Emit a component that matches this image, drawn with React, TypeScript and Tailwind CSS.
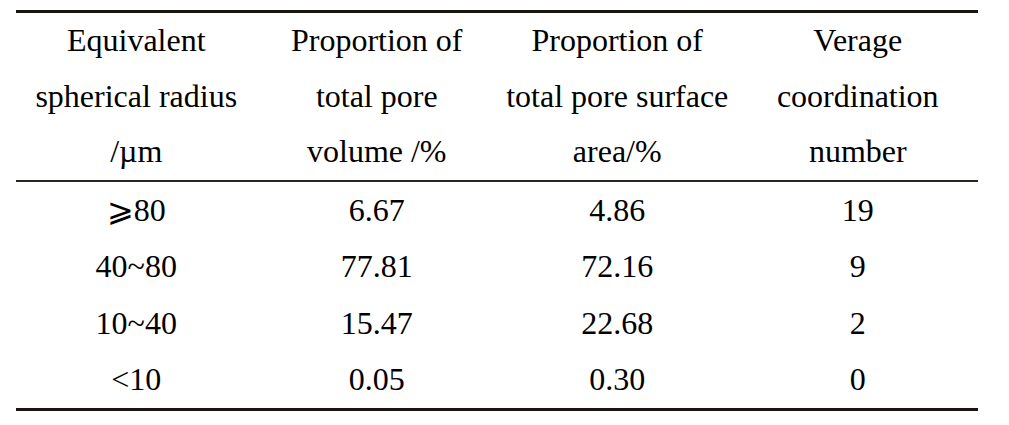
import React from "react"

const headers = [
    ["Equivalent", "spherical radius", "/\u00b5m"],
    ["Proportion of", "total pore", "volume /%"],
    ["Proportion of", "total pore surface", "area/%"],
    ["Verage", "coordination", "number"],
]

const rows = [
    ["\u2A7E80", "6.67", "4.86", "19"],
    ["40~80", "77.81", "72.16", "9"],
    ["10~40", "15.47", "22.68", "2"],
    ["\u003c10", "0.05", "0.30", "0"],
]

const App = () => {
    return (
        <div className="bg-white pt-[10px] pl-[16px] pb-[12px] text-[32px] text-black">
            <div className="w-[962px] border-t-[3px] border-b-[3px] border-[#1a1512]">
                <div className="grid grid-cols-4 leading-[55.5px] border-b-[2px] border-[#2a2622]">
                    {headers.map((lines, i) => (
                        <div key={i} className="flex flex-col items-center">
                            {lines.map((line) => (
                                <div key={line} className="font-['Liberation_Serif']">{line}</div>
                            ))}
                        </div>
                    ))}
                </div>
                {rows.map((row, i) => (
                    <div key={i} className="grid grid-cols-4 leading-[56.5px]">
                        {row.map((cell, j) => (
                            <div key={j} className="font-['Liberation_Serif'] text-center">{cell}</div>
                        ))}
                    </div>
                ))}
            </div>
        </div>
    )
}

export default App
